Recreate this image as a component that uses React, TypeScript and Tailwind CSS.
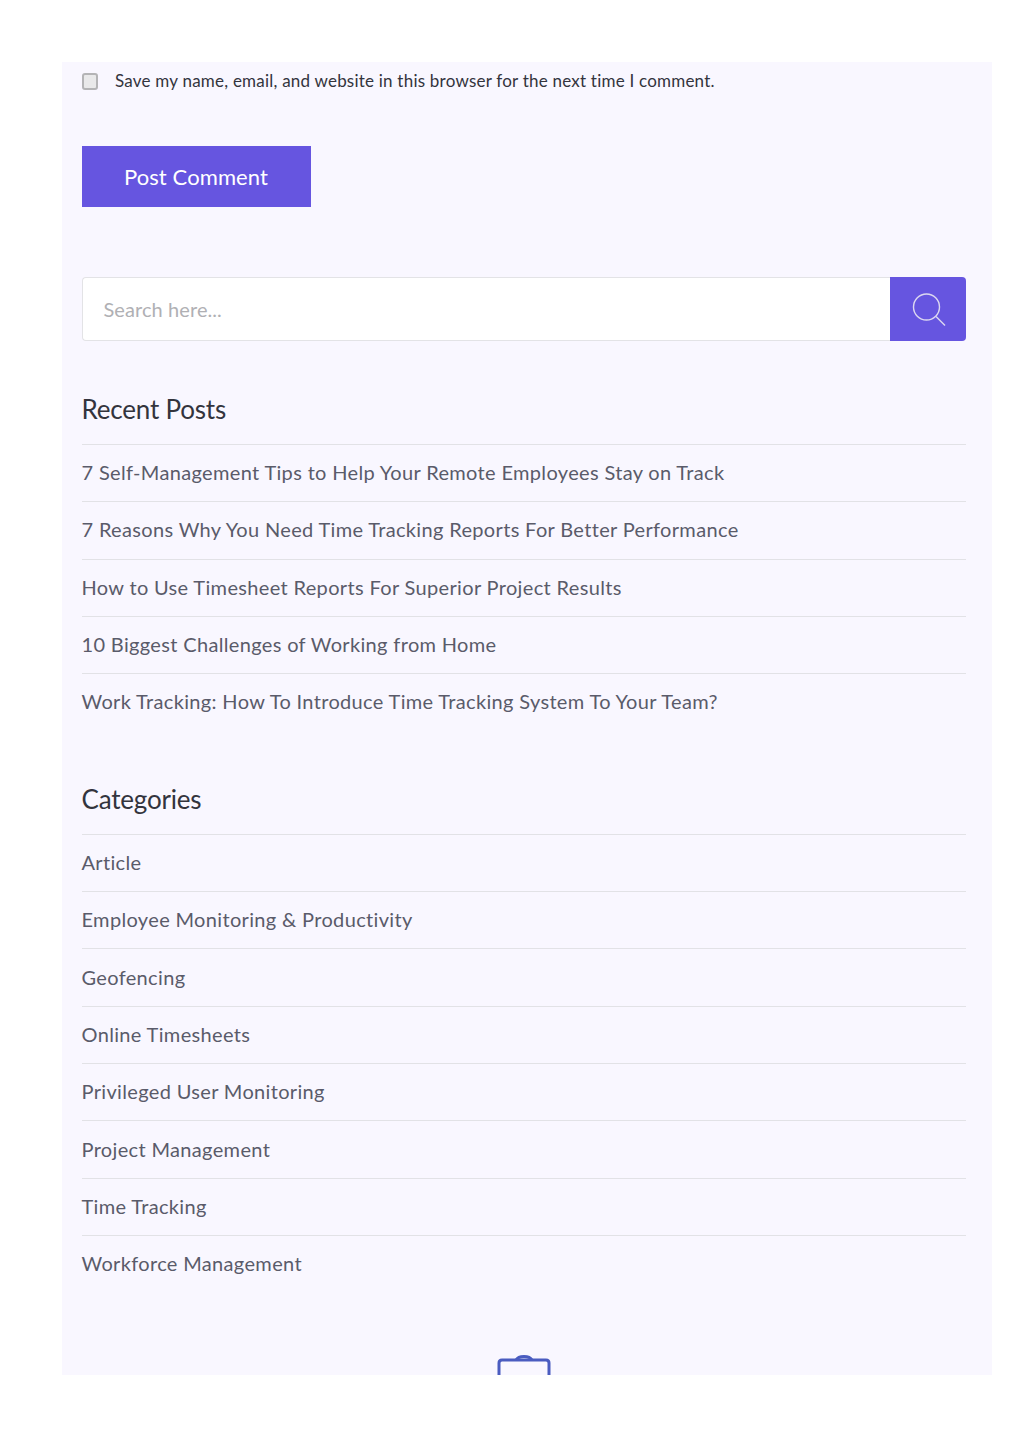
const RECENT_POSTS = [
  "7 Self-Management Tips to Help Your Remote Employees Stay on Track",
  "7 Reasons Why You Need Time Tracking Reports For Better Performance",
  "How to Use Timesheet Reports For Superior Project Results",
  "10 Biggest Challenges of Working from Home",
  "Work Tracking: How To Introduce Time Tracking System To Your Team?",
];

const CATEGORIES = [
  "Article",
  "Employee Monitoring & Productivity",
  "Geofencing",
  "Online Timesheets",
  "Privileged User Monitoring",
  "Project Management",
  "Time Tracking",
  "Workforce Management",
];

function LinkList({ title, items }: { title: string; items: string[] }) {
  return (
    <div>
      <h3 className="text-[26px] leading-[36px] font-normal tracking-[-0.2px] text-[#33343d] pb-[17px]">{title}</h3>
      <ul>
        {items.map((item) => (
          <li key={item} className="border-t border-[#e2e2e6] h-[57.3px] pb-[2px] flex items-center text-[20px] tracking-[0.34px] text-[#5a5b6a]">
            {item}
          </li>
        ))}
      </ul>
    </div>
  );
}

export default function App() {
  return (
    <div className="h-[1449px] bg-white pt-[62px] pl-[62px] font-['Lato',sans-serif]">
      <div className="w-[930px] h-[1313px] bg-[#f9f7ff] overflow-hidden pl-[19.5px] pr-[26px]">
        <label className="flex items-center h-[38px] text-[17px] tracking-[0.22px] text-[#33343d]">
          <span className="w-[16.5px] h-[17px] rounded-[3px] border-2 border-[#b4b4b6] bg-[#e9e9ea]" />
          <span className="ml-[17px]">Save my name, email, and website in this browser for the next time I comment.</span>
        </label>

        <button className="mt-[46px] w-[229px] h-[61px] bg-[#6655e0] text-white text-[22px] tracking-[0.1px]">Post Comment</button>

        <div className="mt-[70px] flex h-[64px]">
          <div className="flex-1 bg-white border border-[#e3e3e6] border-r-0 rounded-l-[4px] flex items-center pl-[21px] text-[20px] tracking-[0.08px] text-[#b0b0b4]">
            Search here...
          </div>
          <button className="w-[76px] bg-[#6655e0] rounded-r-[4px] flex items-center justify-center">
            <svg width="36" height="36" viewBox="0 0 36 36" fill="none" stroke="#dcd8f0" strokeWidth="1.4">
              <circle cx="16.5" cy="16" r="13" />
              <path d="M26 25.5 L35 34.5" />
            </svg>
          </button>
        </div>

        <div className="mt-[50px]">
          <LinkList title="Recent Posts" items={RECENT_POSTS} />
        </div>
        <div className="mt-[50.4px]">
          <LinkList title="Categories" items={CATEGORIES} />
        </div>

        <div className="mt-[62.6px] flex justify-center">
          <svg width="56" height="30" viewBox="0 0 56 30" fill="none" stroke="#4a5cc0" strokeWidth="3">
            <path d="M3 30 V8 Q3 5 6 5 H50 Q53 5 53 8 V30" />
            <path d="M20 5 Q22 1.5 28 1.5 Q34 1.5 36 5" />
          </svg>
        </div>
      </div>
    </div>
  );
}
